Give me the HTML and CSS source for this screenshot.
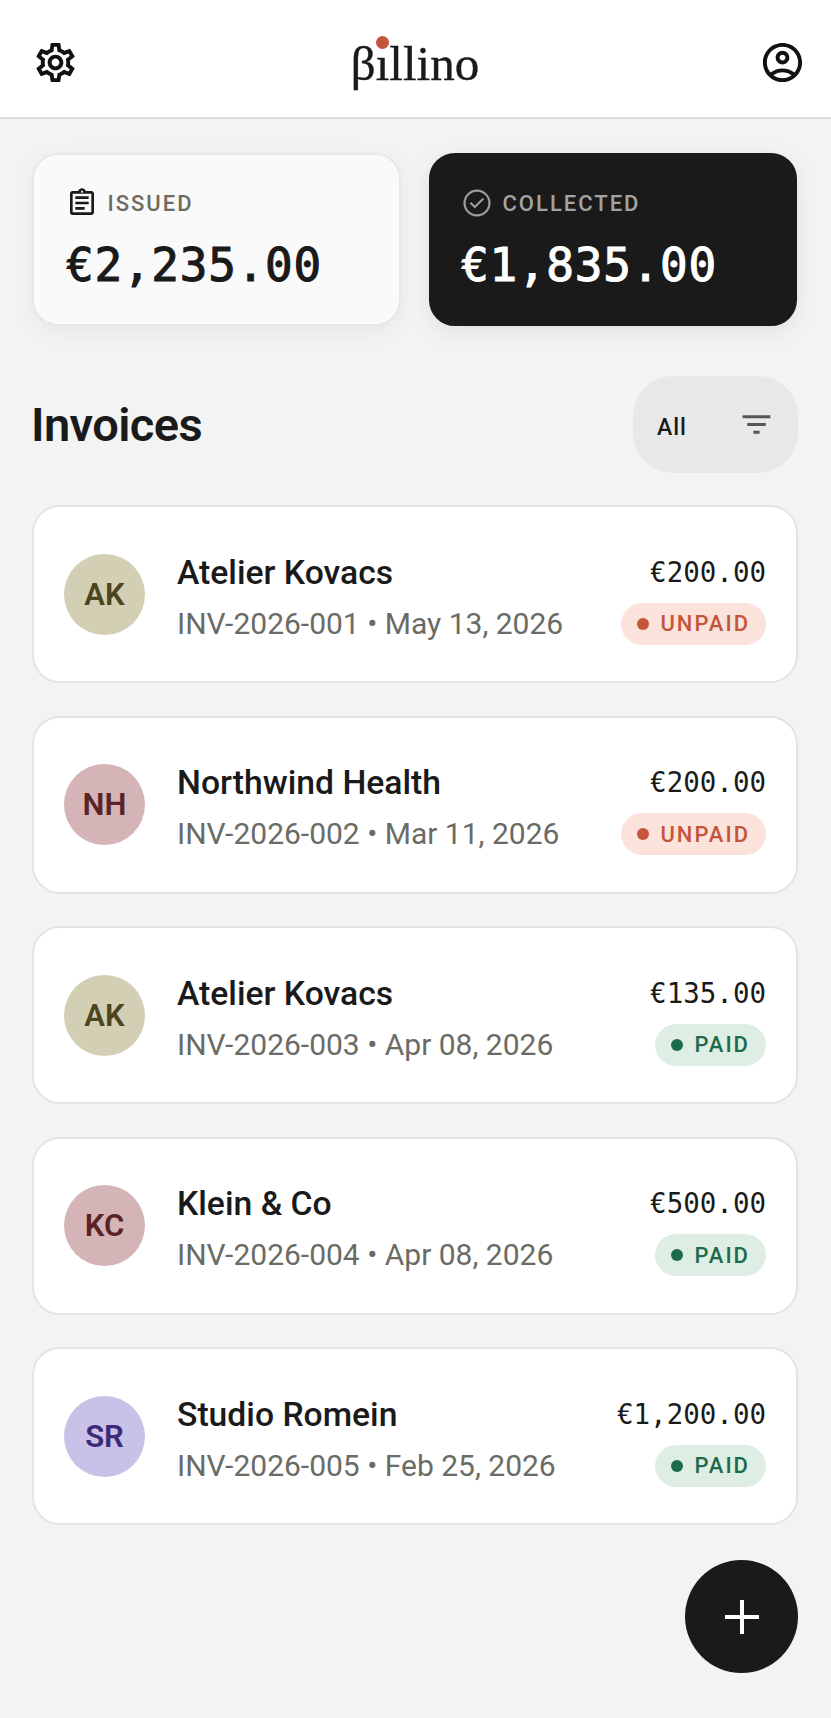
FILE: index.html
```html
<!DOCTYPE html>
<html lang="en">
<head>
    <meta charset="utf-8">
    <title>Billino</title>
    <link rel="stylesheet" href="styles.css">
</head>
<body>
    <header class="topbar">
        <svg class="top-icon" viewBox="0 0 24 24"><path d="M19.43 12.98c.04-.32.07-.64.07-.98 0-.34-.03-.66-.07-.98l2.11-1.65c.19-.15.24-.42.12-.64l-2-3.46c-.09-.16-.26-.25-.44-.25-.06 0-.12.01-.17.03l-2.49 1c-.52-.4-1.08-.73-1.69-.98l-.38-2.65C14.46 2.18 14.25 2 14 2h-4c-.25 0-.46.18-.49.42l-.38 2.65c-.61.25-1.17.59-1.69.98l-2.49-1c-.06-.02-.12-.03-.18-.03-.17 0-.34.09-.43.25l-2 3.46c-.13.22-.07.49.12.64l2.11 1.65c-.04.32-.07.65-.07.98 0 .33.03.66.07.98l-2.11 1.65c-.19.15-.24.42-.12.64l2 3.46c.09.16.26.25.44.25.06 0 .12-.01.17-.03l2.49-1c.52.4 1.08.73 1.69.98l.38 2.65c.03.24.24.42.49.42h4c.25 0 .46-.18.49-.42l.38-2.65c.61-.25 1.17-.59 1.69-.98l2.49 1c.06.02.12.03.18.03.17 0 .34-.09.43-.25l2-3.46c.12-.22.07-.49-.12-.64l-2.11-1.65zm-1.98-1.71c.04.31.05.52.05.73 0 .21-.02.43-.05.73l-.14 1.13.89.7 1.08.84-.7 1.21-1.27-.51-1.04-.42-.9.68c-.43.32-.84.56-1.25.73l-1.06.43-.16 1.13-.2 1.35h-1.4l-.19-1.35-.16-1.13-1.06-.43c-.43-.18-.83-.41-1.23-.71l-.91-.7-1.06.43-1.27.51-.7-1.21 1.08-.84.89-.7-.14-1.13c-.03-.31-.05-.54-.05-.74s.02-.43.05-.73l.14-1.13-.89-.7-1.08-.84.7-1.21 1.27.51 1.04.42.9-.68c.43-.32.84-.56 1.25-.73l1.06-.43.16-1.13.2-1.35h1.39l.19 1.35.16 1.13 1.06.43c.43.18.83.41 1.23.71l.91.7 1.06-.43 1.27-.51.7 1.21-1.07.85-.89.7.14 1.13zM12 8c-2.21 0-4 1.79-4 4s1.79 4 4 4 4-1.79 4-4-1.79-4-4-4zm0 6c-1.1 0-2-.9-2-2s.9-2 2-2 2 .9 2 2-.9 2-2 2z"/></svg>
        <div class="logo">βıllino<span class="logo-dot"></span></div>
        <svg class="top-icon" viewBox="0 0 24 24"><path d="M12 2C6.48 2 2 6.48 2 12s4.48 10 10 10 10-4.48 10-10S17.52 2 12 2zM7.35 18.5C8.66 17.56 10.26 17 12 17s3.34.56 4.65 1.5C15.34 19.44 13.74 20 12 20s-3.34-.56-4.65-1.5zm10.79-1.38C16.45 15.8 14.32 15 12 15s-4.45.8-6.14 2.12C4.7 15.73 4 13.95 4 12c0-4.42 3.58-8 8-8s8 3.58 8 8c0 1.95-.7 3.73-1.86 5.12zM12 6c-1.93 0-3.5 1.57-3.5 3.5S10.07 13 12 13s3.5-1.57 3.5-3.5S13.93 6 12 6zm0 5c-.83 0-1.5-.67-1.5-1.5S11.17 8 12 8s1.5.67 1.5 1.5S12.83 11 12 11z"/></svg>
    </header>

    <main class="content">
        <!-- Totals -->
        <section class="totals">
            <div class="total">
                <div class="total-label">
                    <svg viewBox="0 0 24 24"><path d="M7 15h7v2H7zm0-4h10v2H7zm0-4h10v2H7zm12-4h-4.18C14.4 1.84 13.3 1 12 1c-1.3 0-2.4.84-2.82 2H5c-.14 0-.27.01-.4.04-.39.08-.74.28-1.01.55-.18.18-.33.4-.43.64-.1.23-.16.49-.16.77v14c0 .27.06.54.16.78s.25.45.43.64c.27.27.62.47 1.01.55.13.02.26.03.4.03h14c1.1 0 2-.9 2-2V5c0-1.1-.9-2-2-2zm-7-.25c.41 0 .75.34.75.75s-.34.75-.75.75-.75-.34-.75-.75.34-.75.75-.75zM19 19H5V5h14v14z"/></svg>
                    <span>ISSUED</span>
                </div>
                <div class="total-value">€2,235.00</div>
            </div>
            <div class="total total-dark">
                <div class="total-label">
                    <svg viewBox="0 0 24 24"><path d="M12 2C6.48 2 2 6.48 2 12s4.48 10 10 10 10-4.48 10-10S17.52 2 12 2zm0 18.700c-4.800 0-8.700-3.900-8.700-8.700S7.200 3.300 12 3.300s8.700 3.900 8.700 8.700-3.900 8.700-8.700 8.700zm4.300-12.500l-5.900 5.900-2.700-2.700-.9.9 3.600 3.600 6.800-6.800z"/></svg>
                    <span>COLLECTED</span>
                </div>
                <div class="total-value">€1,835.00</div>
            </div>
        </section>

        <div class="list-head">
            <h1>Invoices</h1>
            <div class="filter">
                <span>All</span>
                <svg viewBox="0 0 24 24"><path d="M10 18h4v-2h-4v2zM3 6v2h18V6H3zm3 7h12v-2H6v2z"/></svg>
            </div>
        </div>

        <!-- Invoice rows -->
        <section class="invoices">
            <div class="invoice">
                <div class="avatar av-olive">AK</div>
                <div class="info">
                    <div class="name">Atelier Kovacs</div>
                    <div class="meta">INV-2026-001 • May 13, 2026</div>
                </div>
                <div class="side">
                    <div class="amount">€200.00</div>
                    <div class="badge unpaid"><i></i>UNPAID</div>
                </div>
            </div>
            <div class="invoice">
                <div class="avatar av-rose">NH</div>
                <div class="info">
                    <div class="name">Northwind Health</div>
                    <div class="meta">INV-2026-002 • Mar 11, 2026</div>
                </div>
                <div class="side">
                    <div class="amount">€200.00</div>
                    <div class="badge unpaid"><i></i>UNPAID</div>
                </div>
            </div>
            <div class="invoice">
                <div class="avatar av-olive">AK</div>
                <div class="info">
                    <div class="name">Atelier Kovacs</div>
                    <div class="meta">INV-2026-003 • Apr 08, 2026</div>
                </div>
                <div class="side">
                    <div class="amount">€135.00</div>
                    <div class="badge paid"><i></i>PAID</div>
                </div>
            </div>
            <div class="invoice">
                <div class="avatar av-rose">KC</div>
                <div class="info">
                    <div class="name">Klein &amp; Co</div>
                    <div class="meta">INV-2026-004 • Apr 08, 2026</div>
                </div>
                <div class="side">
                    <div class="amount">€500.00</div>
                    <div class="badge paid"><i></i>PAID</div>
                </div>
            </div>
            <div class="invoice">
                <div class="avatar av-violet">SR</div>
                <div class="info">
                    <div class="name">Studio Romein</div>
                    <div class="meta">INV-2026-005 • Feb 25, 2026</div>
                </div>
                <div class="side">
                    <div class="amount">€1,200.00</div>
                    <div class="badge paid"><i></i>PAID</div>
                </div>
            </div>
        </section>
    </main>

    <button class="fab" type="button">
        <svg viewBox="0 0 34 34"><path d="M17 0v34M0 17h34"/></svg>
    </button>
</body>
</html>
```

FILE: styles.css
```css
* { box-sizing: border-box; }

body {
    margin: 0;
    height: 1718px;
    position: relative;
    overflow: hidden;
    background-color: #f3f3f3;
    color: #1a1a1a;
    font-family: Roboto, sans-serif;
}

.topbar {
    height: 119px;
    padding: 7px 25px 0 32px;
    display: flex;
    align-items: center;
    justify-content: space-between;
    background-color: #fff;
    border-bottom: 2px solid #dedede;
}
.top-icon { width: 47px; height: 47px; fill: #111; }

.logo {
    position: relative;
    margin: 4px 8px 0 0;
    font-family: "Liberation Serif", serif;
    font-size: 49px;
    line-height: 56px;
    color: #1a1a1a;
    -webkit-text-stroke: 0.4px #1a1a1a;
}
.logo-dot {
    position: absolute;
    left: 25px;
    top: 0;
    width: 13px;
    height: 13px;
    border-radius: 50%;
    background-color: #c4553a;
}

.content { padding: 34px 33px 0 32px; }

.totals { display: grid; grid-template-columns: 369px 367.5px; gap: 28px; }
.total {
    height: 173px;
    padding: 32px 30px 0 32px;
    background-color: #fafafa;
    border: 2px solid #e8e8e8;
    border-radius: 26px;
    box-shadow: 0 6px 22px rgba(0, 0, 0, 0.05);
}
.total-dark {
    padding-left: 30px;
    background-color: #1a1a1a;
    border-color: #1a1a1a;
    color: #fff;
    box-shadow: 0 6px 22px rgba(0, 0, 0, 0.08);
}
.total-label {
    display: flex;
    align-items: center;
    gap: 9.5px;
    height: 32px;
    font-size: 22px;
    font-weight: 500;
    letter-spacing: 2px;
    color: #6f6b62;
}
.total-label svg { width: 32px; height: 32px; fill: #1a1a1a; }
.total-dark .total-label { color: #a3a3a3; }
.total-dark .total-label svg { fill: #a3a3a3; stroke: #a3a3a3; stroke-width: 0.3; }
.total-value {
    margin-top: 16px;
    font-family: "DejaVu Sans Mono", monospace;
    font-size: 46px;
    line-height: 60px;
    letter-spacing: 0.75px;
    -webkit-text-stroke: 1.1px currentColor;
}

.list-head {
    margin-top: 50px;
    height: 97px;
    display: flex;
    align-items: center;
    justify-content: space-between;
}
.list-head h1 {
    margin: 0 0 0 -1px;
    font-size: 47px;
    font-weight: 600;
    letter-spacing: -0.6px;
}
.filter {
    width: 165px;
    height: 97px;
    padding: 6px 23px 0 24px;
    display: flex;
    align-items: center;
    justify-content: space-between;
    background-color: #e8e8ea;
    border-radius: 40px;
    font-size: 23px;
    font-weight: 500;
    letter-spacing: 1px;
}
.filter svg { width: 37px; height: 37px; fill: #555; margin-top: -6px; }

.invoices {
    margin-top: 32px;
    display: flex;
    flex-direction: column;
    gap: 32.5px;
}
.invoice {
    height: 178px;
    padding: 0 30px;
    display: flex;
    align-items: center;
    gap: 32px;
    background-color: #fff;
    border: 2px solid #e4e4e4;
    border-radius: 28px;
}
.avatar {
    width: 81px;
    height: 81px;
    flex-shrink: 0;
    display: flex;
    align-items: center;
    justify-content: center;
    border-radius: 50%;
    font-size: 31px;
    font-weight: 600;
}
.av-olive { background-color: #d2cfb4; color: #4d4420; }
.av-rose { background-color: #d4b4b6; color: #5a2328; }
.av-violet { background-color: #c9c1e8; color: #3b2a78; }

.info { flex: 1; min-width: 0; margin-top: 7.5px; }
.name { font-size: 33.7px; font-weight: 500; line-height: 42px; }
.meta { margin-top: 10px; font-size: 30px; line-height: 40px; color: #6b6b66; white-space: nowrap; }

.side { display: flex; flex-direction: column; align-items: flex-end; gap: 13px; margin-top: 10px; }
.amount {
    font-family: "DejaVu Sans Mono", monospace;
    font-size: 27.5px;
    line-height: 36px;
}
.badge {
    height: 42px;
    padding: 0 16px;
    display: flex;
    align-items: center;
    gap: 11px;
    border-radius: 21px;
    font-size: 22px;
    font-weight: 500;
    letter-spacing: 2px;
}
.badge i { width: 12px; height: 12px; border-radius: 50%; background-color: currentColor; }
.unpaid { background-color: #fbe3dc; color: #c4553a; }
.paid { background-color: #dfeee5; color: #1d6b4a; }

.fab {
    position: absolute;
    left: 685px;
    top: 1560px;
    width: 113px;
    height: 113px;
    padding: 0;
    display: flex;
    align-items: center;
    justify-content: center;
    border: none;
    border-radius: 50%;
    background-color: #1a1a1a;
}
.fab svg { width: 34px; height: 34px; fill: none; stroke: #fff; stroke-width: 4; }
```
